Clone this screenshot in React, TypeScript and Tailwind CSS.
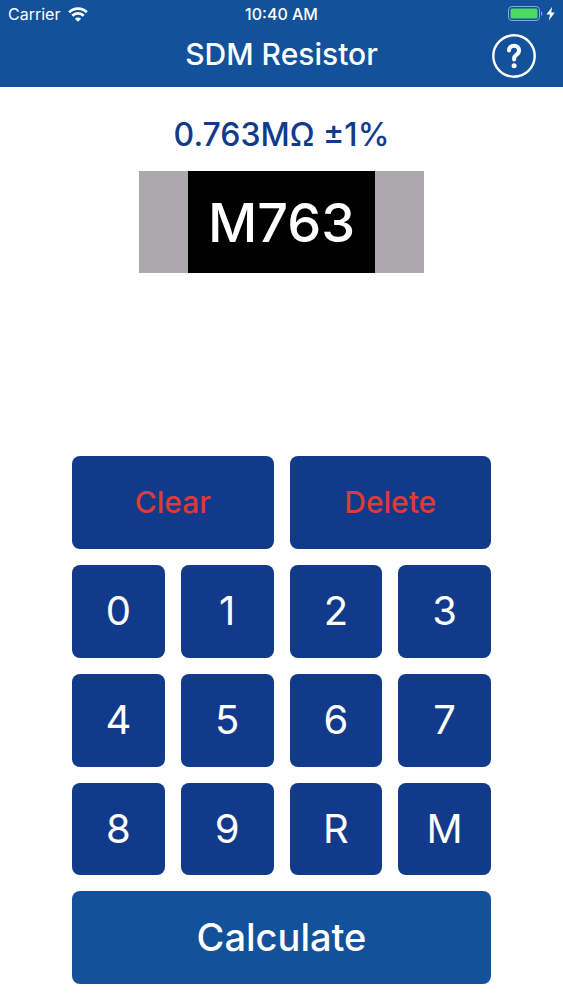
import { useState } from "react";

const KEYS = ["0", "1", "2", "3", "4", "5", "6", "7", "8", "9", "R", "M"];
const KEY_STYLE =
  "flex items-center justify-center rounded-lg bg-[#113b8a] active:opacity-80";

// "4R7" -> 4.7Ω, "M763" -> 0.763MΩ, "473" -> 47kΩ
function readCode(code: string) {
  const mark = code.match(/[RM]/)?.[0];
  if (mark) {
    const value = Number(code.replace(mark, "."));
    return `${value || 0}${mark === "M" ? "M" : ""}Ω ±1%`;
  }
  if (code.length < 3) return `${Number(code)}Ω ±5%`;

  const ohms = Number(code.slice(0, -1)) * 10 ** Number(code.slice(-1));
  const tolerance = code.length === 4 ? "±1%" : "±5%";
  if (ohms >= 1e6) return `${ohms / 1e6}MΩ ${tolerance}`;
  if (ohms >= 1e3) return `${ohms / 1e3}kΩ ${tolerance}`;
  return `${ohms}Ω ${tolerance}`;
}

function WifiIcon() {
  return (
    <svg width="20" height="15" viewBox="0 0 20 15" fill="none" stroke="white" strokeWidth="2.8">
      <path d="M1.2 5.2a12.6 12.6 0 0 1 17.6 0" />
      <path d="M4.3 8.8a8.1 8.1 0 0 1 11.4 0" />
      <path d="M10 14.8 6.9 11.7a4.4 4.4 0 0 1 6.2 0Z" fill="white" stroke="none" />
    </svg>
  );
}

function BatteryIcon() {
  return (
    <svg width="48" height="16" viewBox="0 0 48 16" fill="none">
      <rect x="1.5" y="0.5" width="31" height="14" rx="3.5" stroke="#86a9d6" />
      <rect x="3.5" y="2.5" width="27" height="10" rx="1.5" fill="#4cd964" />
      <path d="M34 5.2c1.7.7 1.7 4 0 4.7Z" fill="#86a9d6" />
      <path d="M45.2.8 39.4 8.6h3.6L41.8 14.6l6-8.2h-3.6Z" fill="white" />
    </svg>
  );
}

function HelpIcon() {
  return (
    <svg width="44" height="44" viewBox="0 0 44 44" fill="none" stroke="white">
      <circle cx="22" cy="22" r="20.7" strokeWidth="2.4" />
      <path
        d="M17 16.6c0-3.2 2.1-4.9 5-4.9s5 1.8 5 4.7c0 2.2-1.2 3.3-2.7 4.4-1.5 1.1-2.2 2-2.2 3.7v1"
        strokeWidth="4"
        strokeLinecap="round"
        strokeLinejoin="round"
      />
      <circle cx="22.1" cy="31.7" r="2.5" fill="white" stroke="none" />
    </svg>
  );
}

export default function App() {
  const [code, setCode] = useState("M763");
  const [reading, setReading] = useState("0.763MΩ ±1%");

  function press(key: string) {
    if (code.length >= 4) return;
    if (/[RM]/.test(key) && /[RM]/.test(code)) return;
    setCode(code + key);
  }

  function clear() {
    setCode("");
    setReading("");
  }

  return (
    <div className="flex min-h-screen flex-col bg-white font-['Inter',sans-serif]">
      <header className="bg-[#13519b] pb-1 text-white">
        <div className="grid h-7 grid-cols-3 items-center px-2 text-base">
          <div className="flex items-center gap-2">
            <span>Carrier</span>
            <WifiIcon />
          </div>
          <span className="text-center font-medium">10:40 AM</span>
          <div className="flex justify-end">
            <BatteryIcon />
          </div>
        </div>
        <div className="grid h-[55px] grid-cols-[1fr_auto_1fr] items-center px-[27px]">
          <h1 className="col-start-2 pb-1 text-[30px] leading-10 font-medium">SDM Resistor</h1>
          <button type="button" aria-label="Help" className="justify-self-end">
            <HelpIcon />
          </button>
        </div>
      </header>

      <main className="flex flex-1 flex-col">
        <section className="flex flex-col items-center pt-7">
          <output className="h-10 text-[32px] leading-10 font-medium text-[#113b8a]">{reading}</output>
          <div className="mt-4 flex h-[102px] border-x-[49px] border-[#aba9ab] bg-black">
            <span className="flex w-[187px] items-center justify-center text-[54px] font-medium text-white">
              {code}
            </span>
          </div>
        </section>

        <section className="mt-auto grid auto-rows-fr grid-cols-4 gap-4 px-[72px] pt-4 pb-4">
          <button
            type="button"
            onClick={clear}
            className={`${KEY_STYLE} col-span-2 text-[30px] font-medium text-[#dc3b36]`}
          >
            Clear
          </button>
          <button
            type="button"
            onClick={() => setCode(code.slice(0, -1))}
            className={`${KEY_STYLE} col-span-2 text-[30px] font-medium text-[#dc3b36]`}
          >
            Delete
          </button>
          {KEYS.map((key) => (
            <button
              key={key}
              type="button"
              onClick={() => press(key)}
              className={`${KEY_STYLE} aspect-square text-[40px] text-white`}
            >
              {key}
            </button>
          ))}
          <button
            type="button"
            onClick={() => setReading(readCode(code))}
            className="col-span-4 rounded-lg bg-[#13519b] text-[38px] font-medium text-white active:opacity-80"
          >
            Calculate
          </button>
        </section>
      </main>
    </div>
  );
}
